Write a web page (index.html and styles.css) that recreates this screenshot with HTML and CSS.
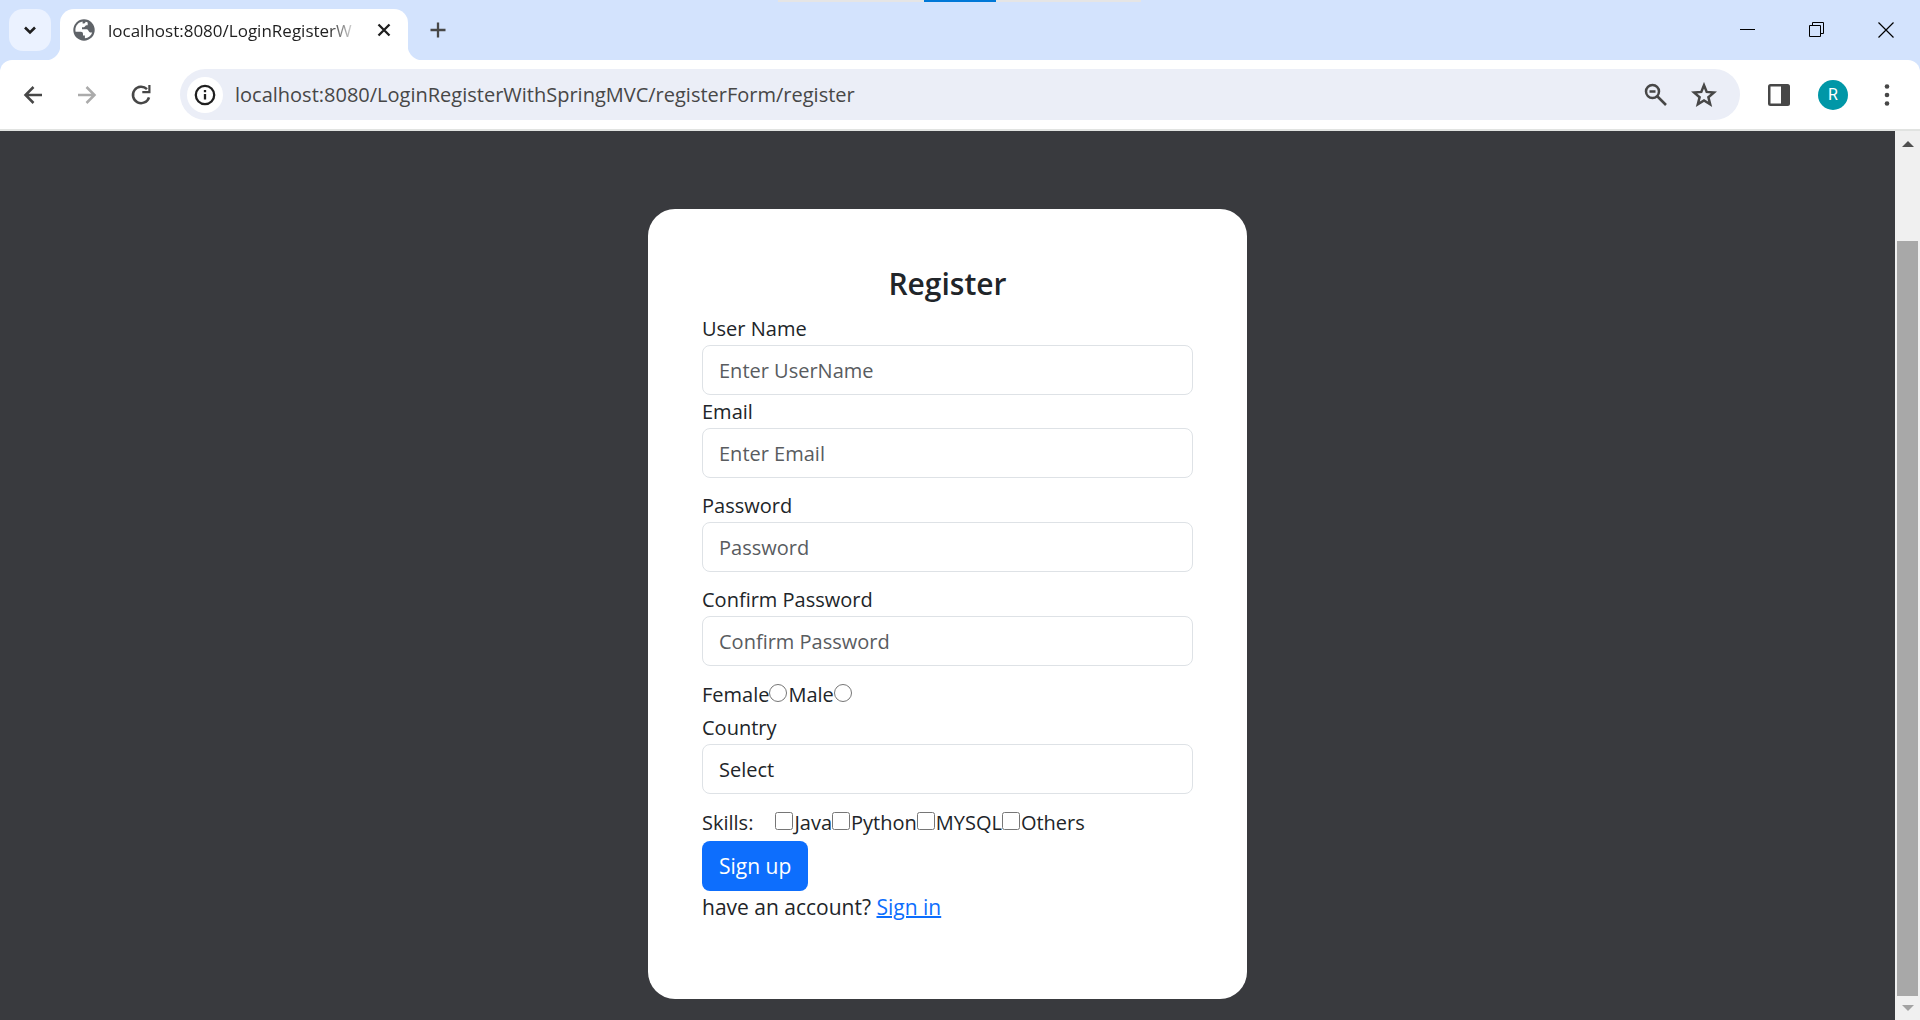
FILE: index.html
```html
<!DOCTYPE html>
<html lang="en">
<head>
<meta charset="utf-8">
<meta name="viewport" content="width=device-width, initial-scale=1">
<title>localhost:8080/LoginRegisterWithSpringMVC</title>
<link rel="stylesheet" href="styles.css">
</head>
<body>
<div class="window">
  <div class="share-bar"><span class="share-grip"></span></div>
  <header class="tab-strip">
    <button class="tab-search" aria-label="Search tabs">
      <svg width="24" height="24" viewBox="0 0 24 24"><path d="M7 9.500l5 5 5-5" fill="none" stroke="#1f1f1f" stroke-width="2.600"/></svg>
    </button>
    <div class="tab">
      <svg class="globe" width="22" height="22" viewBox="0 0 22 22"><circle cx="11" cy="11" r="10.700" fill="#5f6368"/><path d="M9.600 2.600C5.300 3.300 2.400 6.800 2.400 11c0 .7.1 1.200.2 1.800h5.300c1.300 0 2.100.8 2.100 2.100v1.500h1.900v2.900c3.500-.4 6.300-2.700 7.300-5.900h-1.900c-1.700 0-1.700-2.300-3.200-3.100H9V8.200h1.900c1.300 0 1.300-1.900 2.600-1.900h1.200V3.400c-.6-.3-1.300-.5-2-.7-.3 1.300-1.300 1.800-3.100 1.800z" fill="#fff"/></svg>
      <span class="tab-title">localhost:8080/LoginRegisterW</span>
      <button class="icon-button tab-close" aria-label="Close tab">
        <svg width="24" height="24" viewBox="0 0 24 24"><path d="M6.500 6.500l11 11M17.500 6.500l-11 11" stroke="#1f1f1f" stroke-width="2.300"/></svg>
      </button>
    </div>
    <button class="icon-button new-tab" aria-label="New tab">
      <svg width="24" height="24" viewBox="0 0 24 24"><path d="M12 4.500v15M4.500 12h15" stroke="#474747" stroke-width="2.300"/></svg>
    </button>
    <div class="window-controls">
      <button class="icon-button" aria-label="Minimize"><svg width="16" height="16" viewBox="0 0 16 16"><path d="M0 7.500h15" stroke="#000"/></svg></button>
      <button class="icon-button" aria-label="Restore"><svg width="16" height="16" viewBox="0 0 16 16"><path d="M.5 3.500h11v11H.5zM3.500 3.500v-3h11v11h-3" fill="none" stroke="#000"/></svg></button>
      <button class="icon-button" aria-label="Close"><svg width="16" height="16" viewBox="0 0 16 16"><path d="M.5.5l15 15M15.500.5l-15 15" stroke="#000" stroke-width="1.200"/></svg></button>
    </div>
  </header>
  <div class="toolbar-back">
    <nav class="toolbar" aria-label="Browser">
      <div class="nav-buttons">
        <button class="icon-button" aria-label="Back"><svg width="24" height="24" viewBox="0 0 24 24"><path d="M21 12H4.500M12.500 4L4.500 12l8 8" fill="none" stroke="#474747" stroke-width="2.500"/></svg></button>
        <button class="icon-button" aria-label="Forward"><svg width="24" height="24" viewBox="0 0 24 24"><path d="M3 12h16.500M11.500 4l8 8-8 8" fill="none" stroke="#ababab" stroke-width="2.500"/></svg></button>
        <button class="icon-button" aria-label="Reload"><svg width="24" height="24" viewBox="0 0 24 24"><path d="M18 6.200A8.200 8.200 0 1 0 20 14.300" fill="none" stroke="#474747" stroke-width="2.500"/><path d="M21.500 2v8.300h-8.200V8h6V2z" fill="#474747"/></svg></button>
      </div>
      <div class="address-bar">
        <button class="site-info" aria-label="Site information"><svg width="22" height="22" viewBox="0 0 22 22"><circle cx="11" cy="11" r="9.200" fill="none" stroke="#1f1f1f" stroke-width="2.300"/><path d="M11 10v5.500M11 6v2.300" stroke="#1f1f1f" stroke-width="2.300"/></svg></button>
        <input class="address" type="text" aria-label="Address" value="localhost:8080/LoginRegisterWithSpringMVC/registerForm/register">
        <button class="icon-button" aria-label="Zoom"><svg width="24" height="24" viewBox="0 0 24 24"><circle cx="8.500" cy="8.500" r="6.500" fill="none" stroke="#474747" stroke-width="2.500"/><path d="M5.500 8.500h6M13 13l9 9" fill="none" stroke="#474747" stroke-width="2.600"/></svg></button>
        <button class="icon-button" aria-label="Bookmark this tab"><svg width="26" height="26" viewBox="0 0 26 26"><path d="M13 3.200l2.700 6.700 7.300.6-5.600 4.700 1.800 7.200-6.200-3.900-6.200 3.900 1.800-7.200L3 10.500l7.300-.6z" fill="none" stroke="#474747" stroke-width="2.500"/></svg></button>
      </div>
      <div class="toolbar-actions">
        <button class="icon-button" aria-label="Side panel"><svg width="22" height="22" viewBox="0 0 22 22"><rect x="0" y="0" width="22" height="22" rx="2.500" fill="#474747"/><path d="M2.500 2.500H13v17H2.500z" fill="#fff"/></svg></button>
        <button class="avatar" aria-label="Profile">R</button>
        <button class="icon-button" aria-label="Menu"><svg width="24" height="24" viewBox="0 0 24 24"><g fill="#474747"><circle cx="12" cy="3.500" r="2.300"/><circle cx="12" cy="12" r="2.300"/><circle cx="12" cy="20.500" r="2.300"/></g></svg></button>
      </div>
    </nav>
  </div>
  <div class="viewport">
    <main class="page">
      <form class="card">
        <h1 class="title">Register</h1>
        <div class="field tight">
          <label for="username">User Name</label>
          <input class="control" id="username" type="text" placeholder="Enter UserName">
        </div>
        <div class="field">
          <label for="email">Email</label>
          <input class="control" id="email" type="email" placeholder="Enter Email">
        </div>
        <div class="field">
          <label for="password">Password</label>
          <input class="control" id="password" type="password" placeholder="Password">
        </div>
        <div class="field">
          <label for="confirm">Confirm Password</label>
          <input class="control" id="confirm" type="password" placeholder="Confirm Password">
        </div>
        <div class="choices">
          <label for="female">Female</label><input id="female" type="radio" name="gender"><label for="male">Male</label><input id="male" type="radio" name="gender">
        </div>
        <div class="field">
          <label for="country">Country</label>
          <select class="control" id="country"><option>Select</option></select>
        </div>
        <div class="choices">
          <span class="choices-title">Skills:</span>
          <input id="java" type="checkbox"><label for="java">Java</label><input id="python" type="checkbox"><label for="python">Python</label><input id="mysql" type="checkbox"><label for="mysql">MYSQL</label><input id="others" type="checkbox"><label for="others">Others</label>
        </div>
        <button class="submit" type="button">Sign up</button>
        <p class="account">have an account? <a href="#">Sign in</a></p>
      </form>
    </main>
    <div class="scrollbar" aria-hidden="true">
      <svg width="12" height="6" viewBox="0 0 12 6"><path d="M0 6l6-6 6 6z" fill="#505050"/></svg>
      <div class="thumb"></div>
      <svg width="12" height="6" viewBox="0 0 12 6"><path d="M0 0l6 6 6-6z" fill="#a3a3a3"/></svg>
    </div>
  </div>
</div>
</body>
</html>
```
FILE: styles.css
```css
* { box-sizing: border-box; }
body {
  margin: 0;
  font-family: "Open Sans", "Noto Sans", sans-serif;
  font-size: 20px;
  line-height: 33px;
  color: #212529;
}
button, input, select { font: inherit; color: inherit; }
button { border: 0; padding: 0; background: none; }
svg { display: block; flex: none; }

.window { display: flex; flex-direction: column; min-height: 100vh; }
.share-bar {
  position: absolute;
  top: 0;
  left: 50%;
  width: 363px;
  height: 2px;
  margin-left: -182px;
  background: #e5e5e5;
  display: flex;
  justify-content: center;
}
.share-grip { width: 72px; background: #0078d7; }

.tab-strip {
  display: flex;
  height: 60px;
  padding: 9px 7px 0 9px;
  background: #d3e3fd;
}
.icon-button {
  display: flex;
  align-items: center;
  justify-content: center;
  width: 36px;
  height: 36px;
}
.tab-search {
  display: flex;
  align-items: center;
  justify-content: center;
  width: 42px;
  height: 42px;
  border-radius: 14px;
  background: #ebf2ff;
}
.tab {
  position: relative;
  display: flex;
  align-items: center;
  width: 348px;
  margin-left: 9px;
  padding: 0 6px 9px 13px;
  border-radius: 14px 14px 0 0;
  background: #fff;
}
.tab::before, .tab::after {
  content: "";
  position: absolute;
  bottom: 0;
  width: 15px;
  height: 15px;
}
.tab::before { right: 100%; background: radial-gradient(circle at 0 0, transparent 15px, #fff 16px); }
.tab::after { left: 100%; background: radial-gradient(circle at 100% 0, transparent 15px, #fff 16px); }
.tab-title {
  margin-left: 13px;
  white-space: nowrap;
  font-size: 17px;
  color: #1f1f1f;
  -webkit-mask-image: linear-gradient(to right, #000 220px, transparent 250px);
  mask-image: linear-gradient(to right, #000 220px, transparent 250px);
}
.tab-close { margin-left: auto; }
.new-tab { margin: 1px 0 0 12px; padding-top: 4px; }
.window-controls { display: flex; gap: 33px; margin-left: auto; padding-top: 3px; padding-right: 9px; }

.toolbar-back { background: #d3e3fd; }
.toolbar {
  display: flex;
  align-items: center;
  height: 71px;
  padding: 0 15px;
  border-bottom: 2px solid #e1e3e1;
  border-radius: 12px 12px 0 0;
  background: #fff;
}
.nav-buttons { display: flex; gap: 18px; margin-right: 21px; }
.address-bar {
  flex: 1;
  display: flex;
  align-items: center;
  gap: 12px;
  height: 51px;
  padding: 0 18px 0 7px;
  border-radius: 26px;
  background: #ebeef7;
}
.site-info {
  display: flex;
  align-items: center;
  justify-content: center;
  width: 36px;
  height: 36px;
  border-radius: 50%;
  background: #fff;
}
.address {
  flex: 1;
  min-width: 0;
  padding: 0;
  border: 0;
  outline: 0;
  background: none;
  color: #474747;
}
.toolbar-actions { display: flex; align-items: center; gap: 21px; margin-left: 21px; }
.avatar {
  width: 30px;
  height: 30px;
  border-radius: 50%;
  background: #0097a7;
  color: #fff;
  font: 16px/30px Roboto, sans-serif;
}

.viewport { flex: 1; display: flex; background: #393a3e; }
.page {
  flex: 1;
  display: flex;
  justify-content: center;
  align-items: flex-start;
  padding: 78px 16px 20px;
}
.card {
  width: 100%;
  max-width: 599px;
  padding: 55px 54px 75px;
  border-radius: 27px;
  background: #fff;
}
.title {
  margin: 0 0 8px;
  font-size: 30px;
  line-height: 40px;
  font-weight: 600;
  text-align: center;
}
.field { display: flex; flex-direction: column; margin-bottom: 11px; }
.field.tight { margin-bottom: 0; }
.control {
  width: 100%;
  height: 50px;
  padding: 0 16px;
  border: 1px solid #dee2e6;
  border-radius: 8px;
  background: #fff;
  appearance: none;
}
.control::placeholder { color: #595c5f; opacity: 1; }
.choices { display: flex; align-items: center; height: 34px; }
.choices input { width: 18px; height: 18px; margin: 0 1px 3px 0; }
.choices-title { margin-right: 22px; }
.submit {
  display: block;
  height: 50px;
  margin-top: 2px;
  padding: 0 17px;
  border-radius: 8px;
  background: #0d6efd;
  color: #fff;
}
.submit, .account { font-size: 21px; }
.account { margin: 0; }
.account a { color: #0d6efd; text-decoration-thickness: 2px; }

.scrollbar {
  display: flex;
  flex-direction: column;
  align-items: center;
  width: 25px;
  padding: 10px 2px 9px;
  background: #f0f0f0;
}
.thumb { flex: 1; align-self: stretch; margin: 94px 0 9px; background: #a8a8a8; }
```
